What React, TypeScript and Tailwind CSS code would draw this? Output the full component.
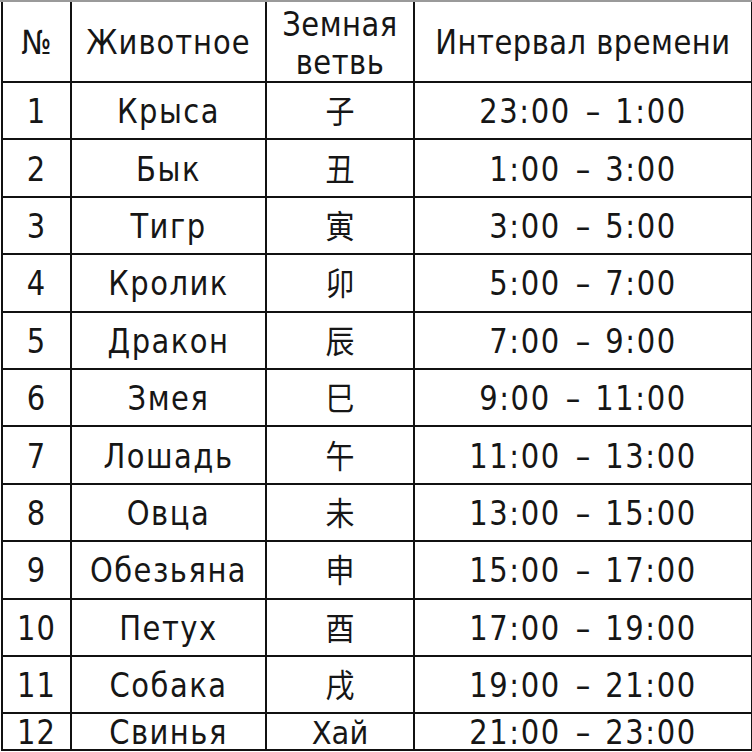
import React from 'react';

const rows: [string, string, string, string, string][] = [
  ['1', 'Крыса', '子', '23:00', '1:00'],
  ['2', 'Бык', '丑', '1:00', '3:00'],
  ['3', 'Тигр', '寅', '3:00', '5:00'],
  ['4', 'Кролик', '卯', '5:00', '7:00'],
  ['5', 'Дракон', '辰', '7:00', '9:00'],
  ['6', 'Змея', '巳', '9:00', '11:00'],
  ['7', 'Лошадь', '午', '11:00', '13:00'],
  ['8', 'Овца', '未', '13:00', '15:00'],
  ['9', 'Обезьяна', '申', '15:00', '17:00'],
  ['10', 'Петух', '酉', '17:00', '19:00'],
  ['11', 'Собака', '戌', '19:00', '21:00'],
  ['12', 'Свинья', 'Хай', '21:00', '23:00'],
];

const cell = 'border-2 border-[#111] text-center align-middle p-0 pt-[4px] whitespace-nowrap';

const App = () => {
  return (
    <div className="w-[752px] h-[752px] overflow-hidden bg-white border-t-2 border-[#9a9a9a]">
      <table
        className="w-[750px] border-collapse table-fixed text-[#161616] text-[29px] leading-none ml-[1px]"
        style={{ fontFamily: '"DejaVu Sans", "Noto Sans CJK SC", sans-serif' }}
      >
        <colgroup>
          <col className="w-[69px]" />
          <col className="w-[195px]" />
          <col className="w-[148px]" />
          <col className="w-[338px]" />
        </colgroup>
        <thead>
          <tr className="h-[80px]">
            <th className={`${cell} font-normal border-t-0`}>
              <span className="inline-block scale-y-[1.15]">№</span>
            </th>
            <th className={`${cell} font-normal border-t-0 tracking-[1px]`}>
              <span className="inline-block scale-y-[1.15]">Животное</span>
            </th>
            <th className={`${cell} font-normal border-t-0 leading-[33px] pt-[2px] tracking-[0.5px]`}>
              <span className="inline-block scale-y-[1.15]">
                Земная
                <br />
                ветвь
              </span>
            </th>
            <th className={`${cell} font-normal border-t-0 tracking-[0.5px]`}>
              <span className="inline-block scale-y-[1.15]">Интервал времени</span>
            </th>
          </tr>
        </thead>
        <tbody>
          {rows.map(([n, animal, branch, from, to], i) => (
            <tr key={n} className={i === rows.length - 1 ? 'h-[37px]' : 'h-[57.4px]'}>
              <td className={`${cell} tracking-[1px]`}>
                <span className="inline-block scale-y-[1.15]">{n}</span>
              </td>
              <td className={`${cell} tracking-[1.5px]`}>
                <span className="inline-block scale-y-[1.15]">{animal}</span>
              </td>
              <td className={cell}>
                <span className="inline-block scale-y-[1.1]">{branch}</span>
              </td>
              <td className={cell}>
                <span className="inline-block scale-y-[1.15] tracking-[1.6px]">
                  {from}
                  <span className="mx-[15px] tracking-normal">–</span>
                  {to}
                </span>
              </td>
            </tr>
          ))}
        </tbody>
      </table>
    </div>
  );
};

export default App;
